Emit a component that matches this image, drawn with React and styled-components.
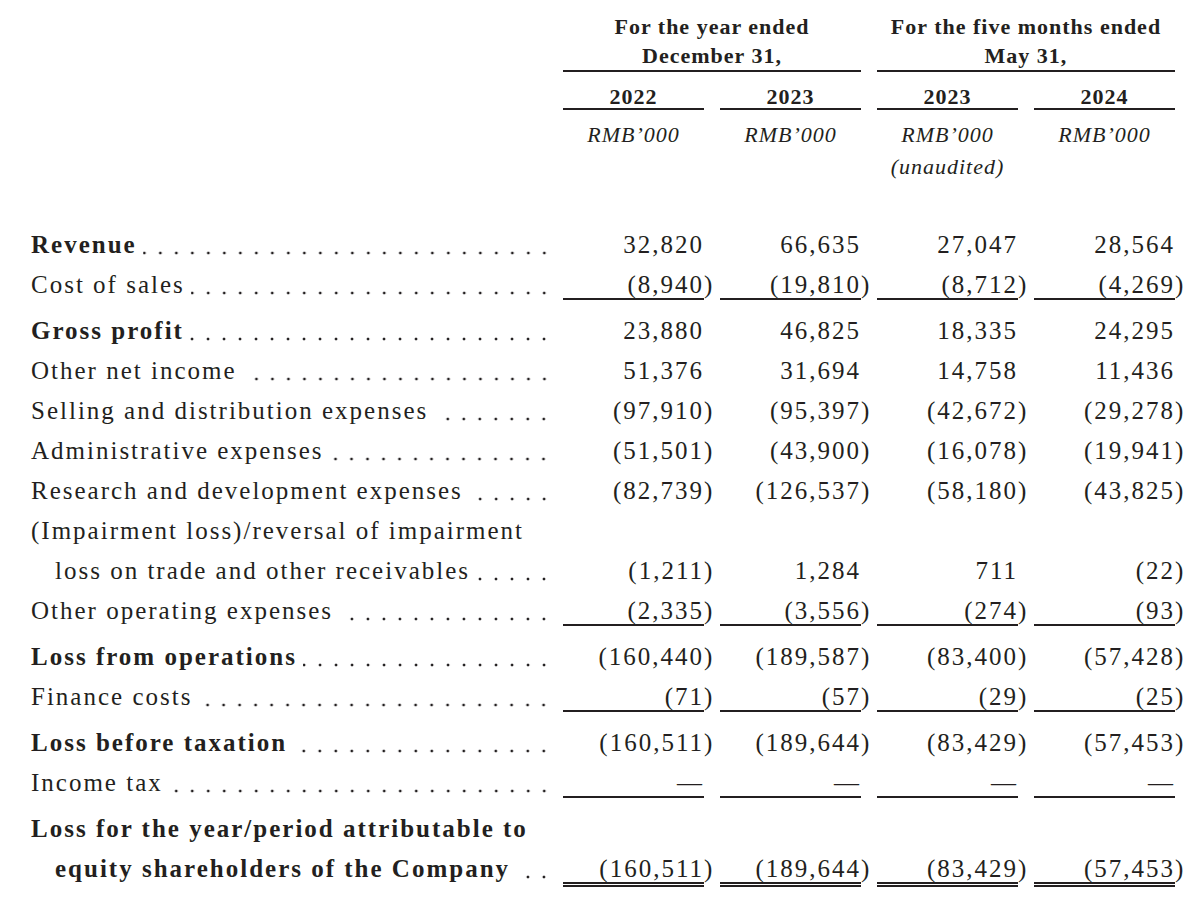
import React from 'react';
import styled, { createGlobalStyle } from 'styled-components';

const ink = '#231f20';

const GlobalStyle = createGlobalStyle`
  html, body {
    margin: 0;
    padding: 0;
    background: #ffffff;
  }
  body {
    color: ${ink};
    font-family: 'Liberation Serif', 'Times New Roman', serif;
  }
`

const Page = styled.div`
  width: 1202px;
  padding: 13px 0 0 31px;
  box-sizing: border-box;
`

const Grid = styled.div`
  display: grid;
  grid-template-columns: 516px repeat(4, 141px);
  column-gap: 16px;
`

// header
const Header = styled(Grid)`
  font-size: 22px;
  letter-spacing: 1px;
`

const GroupHead = styled.div`
  grid-column: ${props => props.$col} / span 2;
  text-align: center;
  font-weight: 700;
  line-height: 28.5px;
  border-bottom: 2px solid ${ink};
`

const Year = styled.div`
  grid-row: 2;
  grid-column: ${props => props.$col};
  margin-top: 14px;
  text-align: center;
  font-weight: 700;
  line-height: 22px;
  border-bottom: 2px solid ${ink};
`

const Unit = styled.div`
  grid-row: 3;
  grid-column: ${props => props.$col};
  margin-top: 9px;
  text-align: center;
  font-style: italic;
  line-height: 32px;
`

// body
const Body = styled.div`
  margin-top: 41.5px;
  font-size: 25px;
  letter-spacing: 2px;
`

const Row = styled(Grid)`
  height: 40px;
  align-items: start;
  margin-top: ${props => (props.$gap ? '6px' : '0')};
`

const Label = styled.div`
  display: flex;
  height: 40px;
  line-height: 40px;
  padding-left: ${props => (props.$indent ? '24px' : '0')};
  font-weight: ${props => (props.$bold ? 700 : 400)};
  white-space: nowrap;
`

// dotted leader drawn as a background so the dots line up from the right edge
const Leader = styled.span`
  flex: 1;
  min-width: 0;
  margin-left: 6px;
  background-image: radial-gradient(circle, ${ink} 1.2px, transparent 1.7px);
  background-size: 16px 6px;
  background-repeat: repeat-x;
  background-position: right -5px top 25px;
`

const NumCell = styled.div`
  margin-top: 7px;
  line-height: 26px;
  text-align: right;
  white-space: nowrap;
  border-bottom: ${props =>
    props.$rule === 'double' ? `5px double ${ink}` :
    props.$rule === 'single' ? `2px solid ${ink}` : '2px solid transparent'};
`

const Close = styled.span`
  margin-right: -0.413em;
`

const rows = [
  { label: 'Revenue', bold: true, values: ['32,820', '66,635', '27,047', '28,564'] },
  { label: 'Cost of sales', rule: 'single', values: ['(8,940)', '(19,810)', '(8,712)', '(4,269)'] },
  { label: 'Gross profit', bold: true, gap: true, values: ['23,880', '46,825', '18,335', '24,295'] },
  { label: 'Other net income', values: ['51,376', '31,694', '14,758', '11,436'] },
  { label: 'Selling and distribution expenses', values: ['(97,910)', '(95,397)', '(42,672)', '(29,278)'] },
  { label: 'Administrative expenses', values: ['(51,501)', '(43,900)', '(16,078)', '(19,941)'] },
  { label: 'Research and development expenses', values: ['(82,739)', '(126,537)', '(58,180)', '(43,825)'] },
  { label: '(Impairment loss)/reversal of impairment' },
  { label: 'loss on trade and other receivables', indent: true, values: ['(1,211)', '1,284', '711', '(22)'] },
  { label: 'Other operating expenses', rule: 'single', values: ['(2,335)', '(3,556)', '(274)', '(93)'] },
  { label: 'Loss from operations', bold: true, gap: true, values: ['(160,440)', '(189,587)', '(83,400)', '(57,428)'] },
  { label: 'Finance costs', rule: 'single', values: ['(71)', '(57)', '(29)', '(25)'] },
  { label: 'Loss before taxation', bold: true, gap: true, values: ['(160,511)', '(189,644)', '(83,429)', '(57,453)'] },
  { label: 'Income tax', rule: 'single', values: ['—', '—', '—', '—'] },
  { label: 'Loss for the year/period attributable to', bold: true, gap: true },
  { label: 'equity shareholders of the Company', bold: true, indent: true, rule: 'double', values: ['(160,511)', '(189,644)', '(83,429)', '(57,453)'] },
]

// closing parenthesis hangs past the column edge, accounting style
const Amount = ({ value }) => {
  if (value.startsWith('(') && value.endsWith(')')) {
    return <>{value.slice(0, -1)}<Close>)</Close></>
  }
  return value
}

const App = () => {
  return (
    <Page>
      <GlobalStyle />
      <Header>
        <GroupHead $col={2}>For the year ended<br />December 31,</GroupHead>
        <GroupHead $col={4}>For the five months ended<br />May 31,</GroupHead>
        <Year $col={2}>2022</Year>
        <Year $col={3}>2023</Year>
        <Year $col={4}>2023</Year>
        <Year $col={5}>2024</Year>
        <Unit $col={2}>RMB’000</Unit>
        <Unit $col={3}>RMB’000</Unit>
        <Unit $col={4}>RMB’000<br />(unaudited)</Unit>
        <Unit $col={5}>RMB’000</Unit>
      </Header>
      <Body>
        {rows.map((row, i) => (
          <Row key={i} $gap={row.gap}>
            <Label $bold={row.bold} $indent={row.indent}>
              <span>{row.label}</span>
              {row.values && <Leader />}
            </Label>
            {row.values && row.values.map((v, j) => (
              <NumCell key={j} $rule={row.rule}>
                <Amount value={v} />
              </NumCell>
            ))}
          </Row>
        ))}
      </Body>
    </Page>
  );
};

export default App;
